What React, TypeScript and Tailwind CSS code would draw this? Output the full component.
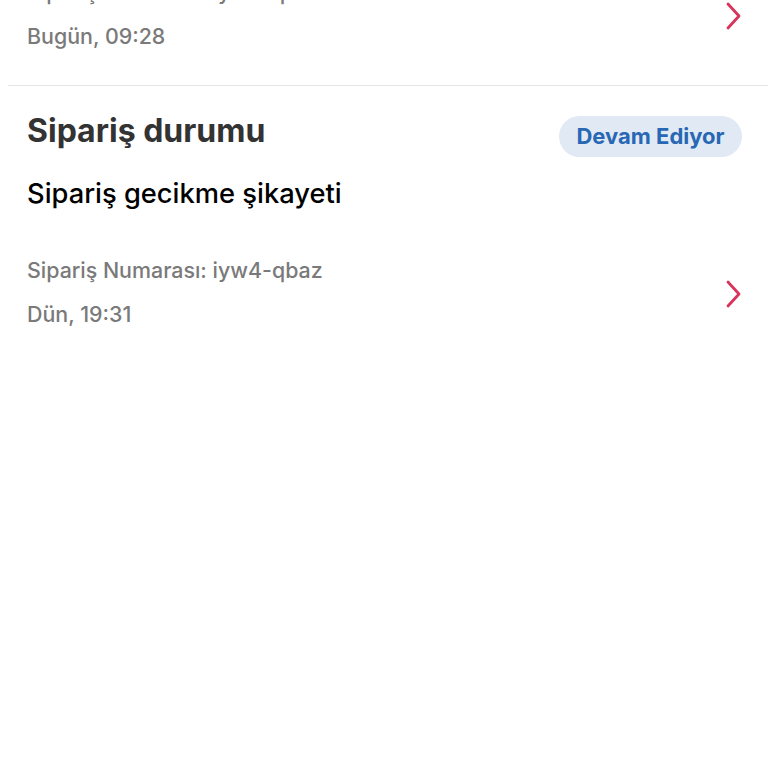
import React from "react";

const FONT = { fontFamily: "Inter, 'Noto Sans', sans-serif" };

function Chevron() {
  return (
    <svg width="18" height="30" viewBox="0 0 18 30" fill="none" className="shrink-0 mt-[4px]">
      <path d="M4 3 L15 15 L4 27" stroke="#d8345c" strokeWidth="2.8" strokeLinecap="round" strokeLinejoin="round" />
    </svg>
  );
}

function OrderMeta({ order, when }: { order: string; when: string }) {
  return (
    <div className="flex items-center justify-between">
      <div className="flex flex-col gap-4">
        <div className="text-[21.4px] leading-[28px] font-medium text-[#7a7a7a]">Sipariş Numarası: {order}</div>
        <div className="text-[21.4px] leading-[28px] font-medium text-[#7a7a7a]">{when}</div>
      </div>
      <Chevron />
    </div>
  );
}

export default function App() {
  return (
    <div className="w-full h-[768px] bg-white overflow-hidden" style={FONT}>
      <div className="-mt-[22px] ml-2">
        {/* previous card (cut off) */}
        <div className="pl-[19px] pr-[26px] pb-[35px] border-b border-[#e4e4e6]">
          <OrderMeta order="iyw4-qbaz" when="Bugün, 09:28" />
        </div>

        <div className="pl-[19px] pr-[26px] pt-[27px] pb-[35px]">
          <div className="flex items-start justify-between">
            <h2 className="text-[32px] leading-[36px] font-bold text-[#333333]">Sipariş durumu</h2>
            <span className="mt-[3px] h-[41px] w-[183px] rounded-full bg-[#e1e9f5] text-[#2767b3] text-[22px] font-bold flex items-center justify-center">
              Devam Ediyor
            </span>
          </div>
          <div className="mt-[21px] text-[27.3px] leading-[32px] font-medium text-black">Sipariş gecikme şikayeti</div>
          <div className="mt-[46px]">
            <OrderMeta order="iyw4-qbaz" when="Dün, 19:31" />
          </div>
        </div>
      </div>
    </div>
  );
}
